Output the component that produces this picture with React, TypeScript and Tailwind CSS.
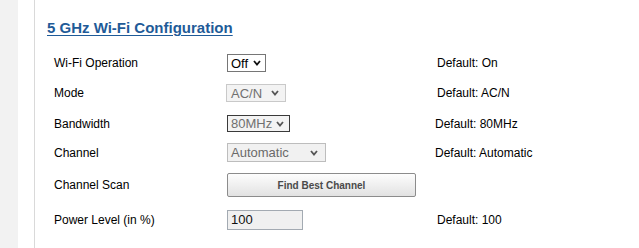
const font = "font-['Liberation_Sans',Arial,sans-serif]";

function Chevron({ color = "#333" }: { color?: string }) {
  return (
    <svg width="8" height="6" viewBox="0 0 8 6" className="shrink-0">
      <polyline
        points="1,1 4,4.5 7,1"
        fill="none"
        stroke={color}
        strokeWidth="1.8"
      />
    </svg>
  );
}

type Row = {
  label: string;
  height: string;
  control: React.ReactNode;
  def?: string;
  defClass?: string;
};

const rows: Row[] = [
  {
    label: "Wi-Fi Operation",
    height: "h-[30px]",
    control: (
      <div className="w-[39px] h-[18px] border border-[#767676] bg-white flex items-center justify-between pl-[3px] pr-[4px]">
        <span className="text-[13px] text-black leading-none">Off</span>
        <Chevron color="#111" />
      </div>
    ),
    def: "Default: On",
    defClass: "pl-[2px]",
  },
  {
    label: "Mode",
    height: "h-[30px]",
    control: (
      <div className="w-[60px] h-[18px] -ml-[1px] border border-[#c9c9c9] bg-[#f3f3f3] flex items-center justify-between pl-[4px] pr-[6px]">
        <span className="text-[13px] text-[#707070] leading-none">AC/N</span>
        <Chevron color="#555" />
      </div>
    ),
    def: "Default: AC/N",
    defClass: "pl-[2px]",
  },
  {
    label: "Bandwidth",
    height: "h-[31px]",
    control: (
      <div className="w-[63px] h-[17px] border border-[#3a3a3a] bg-[#f3f3f3] flex items-center justify-between pl-[3px] pr-[5px]">
        <span className="text-[13px] text-[#707070] leading-none">80MHz</span>
        <Chevron color="#555" />
      </div>
    ),
    def: "Default: 80MHz",
    defClass: "",
  },
  {
    label: "Channel",
    height: "h-[27px]",
    control: (
      <div className="w-[99px] h-[19px] border border-[#bdbdbd] bg-[#f1f1f1] flex items-center justify-between pl-[3px] pr-[7px]">
        <span className="text-[13px] text-[#6a6a6a] leading-none">Automatic</span>
        <Chevron color="#555" />
      </div>
    ),
    def: "Default: Automatic",
    defClass: "",
  },
  {
    label: "Channel Scan",
    height: "h-[38px]",
    control: (
      <button className="w-[189px] h-[24px] border border-[#8c8c8c] rounded-[2px] bg-gradient-to-b from-[#fdfdfd] to-[#e2e2e2] text-[10px] font-bold text-[#4a4a4a]">
        Find Best Channel
      </button>
    ),
  },
  {
    label: "Power Level (in %)",
    height: "h-[31px]",
    control: (
      <div className="w-[76px] h-[20px] border border-[#a3aab2] bg-[#f0f0f0] flex items-center pl-[3px]">
        <span className="text-[13px] text-[#111] leading-none">100</span>
      </div>
    ),
    def: "Default: 100",
    defClass: "pl-[2px]",
  },
];

export default function App() {
  return (
    <div className={`w-[639px] h-[248px] bg-white flex overflow-hidden ${font}`}>
      <div className="w-[18px] bg-[#f2f2f2]" />
      <div className="w-[16px] bg-white" />
      <div className="flex-1 border-l border-[#d9d9d9] pl-[12px] pt-[19px]">
        <h1 className="text-[15px] leading-[18px] font-bold text-[#1f5b98] underline underline-offset-[2px]">
          5 GHz Wi-Fi Configuration
        </h1>

        <div className="mt-[11px] flex flex-col">
          {rows.map((row) => (
            <div key={row.label} className={`flex items-center ${row.height}`}>
              <div className="w-[180px] pl-[7px] text-[12px] text-black">
                {row.label}
              </div>
              <div className="w-[208px] flex items-center">{row.control}</div>
              {row.def && (
                <div className={`text-[12px] text-black ${row.defClass}`}>
                  {row.def}
                </div>
              )}
            </div>
          ))}
        </div>
      </div>
    </div>
  );
}
